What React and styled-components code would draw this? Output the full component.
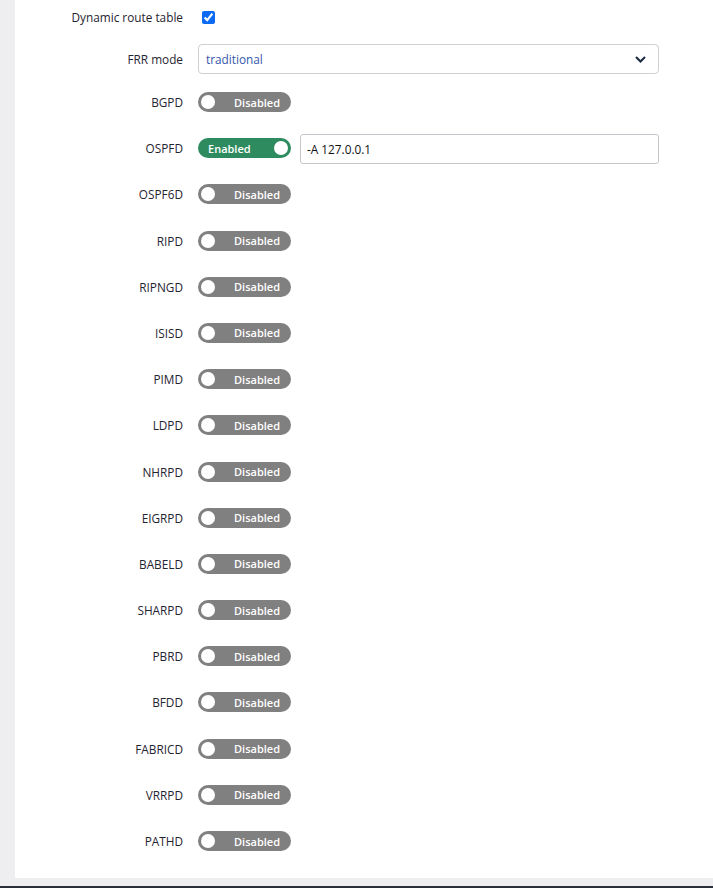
import React from "react";
import styled, { createGlobalStyle } from "styled-components";

const Global = createGlobalStyle`
  html, body { margin: 0; padding: 0; }
  body {
    background: #eeeef1;
    font-family: "Open Sans", "Liberation Sans", sans-serif;
    color: #1f2430;
  }
  * { box-sizing: border-box; }
`;

const Page = styled.div`
  display: flex;
  flex-direction: column;
  min-height: 888px;
`;

const Main = styled.div`
  padding: 0 0 8px 15px;
`;

const Card = styled.div`
  background: #fff;
  padding: 7px 54px 26px 0;
  display: flex;
  flex-direction: column;
  height: 878px;
`;

const Footer = styled.div`
  height: 2px;
  background: #2b2f3a;
`;

const Row = styled.div`
  display: grid;
  grid-template-columns: 168px 1fr;
  column-gap: 15px;
  align-items: center;
  height: 20px;
  margin-top: ${(p) => (p.$first ? 0 : p.$gap ?? 26.2)}px;
`;

const Label = styled.label`
  text-align: right;
  font-size: 11.8px;
  color: #1f2430;
  white-space: nowrap;
`;

const Control = styled.div`
  display: flex;
  align-items: center;
  gap: 9px;
  min-width: 0;
`;

const Check = styled.input`
  margin: 0 0 0 4px;
  width: 13px;
  height: 13px;
  accent-color: #0b6bf5;
`;

const SelectBox = styled.div`
  flex: 1;
  height: 30px;
  margin: -5px 0;
  border: 1px solid #cfcfd4;
  border-radius: 4px;
  display: flex;
  align-items: center;
  justify-content: space-between;
  padding: 0 12px 0 7px;
  font-size: 11.8px;
  color: #3557ad;
  background: #fff;
`;

const TextInput = styled.div`
  flex: 1;
  height: 30px;
  margin: -4px 0 -6px;
  border: 1px solid #c6c6cc;
  border-radius: 3px;
  display: flex;
  align-items: center;
  padding: 0 6px;
  font-size: 11.8px;
  color: #111;
`;

const Toggle = styled.div`
  width: 93px;
  height: 20px;
  border-radius: 10px;
  background: ${(p) => (p.$on ? "#2e8b5f" : "#808080")};
  display: flex;
  align-items: center;
  flex-direction: ${(p) => (p.$on ? "row-reverse" : "row")};
  padding: 0 3px;
  flex-shrink: 0;
`;

const Knob = styled.span`
  width: 14px;
  height: 14px;
  border-radius: 50%;
  background: #fff;
  flex-shrink: 0;
`;

const ToggleText = styled.span`
  flex: 1;
  text-align: ${(p) => (p.$on ? "left" : "right")};
  padding: ${(p) => (p.$on ? "0 0 0 7px" : "0 8px 0 0")};
  color: #fff;
  font-size: 11px;
  font-weight: 600;
`;

const Switch = ({ on }) => (
  <Toggle $on={on}>
    <Knob />
    <ToggleText $on={on}>{on ? "Enabled" : "Disabled"}</ToggleText>
  </Toggle>
);

const Chevron = () => (
  <svg width="11" height="7" viewBox="0 0 11 7">
    <path d="M1 1l4.5 4.5L10 1" fill="none" stroke="#1b2a40" strokeWidth="2" />
  </svg>
);

const daemons = [
  "OSPF6D", "RIPD", "RIPNGD", "ISISD", "PIMD", "LDPD", "NHRPD", "EIGRPD",
  "BABELD", "SHARPD", "PBRD", "BFDD", "FABRICD", "VRRPD", "PATHD",
];

export default function App() {
  return (
    <Page>
      <Global />
      <Main>
        <Card>
          <Row $first>
            <Label>Dynamic route table</Label>
            <Control>
              <Check type="checkbox" defaultChecked />
            </Control>
          </Row>
          <Row $gap={22}>
            <Label>FRR mode</Label>
            <Control>
              <SelectBox>
                <span>traditional</span>
                <Chevron />
              </SelectBox>
            </Control>
          </Row>
          <Row $gap={23}>
            <Label>BGPD</Label>
            <Control>
              <Switch on={false} />
            </Control>
          </Row>
          <Row>
            <Label>OSPFD</Label>
            <Control>
              <Switch on />
              <TextInput>-A 127.0.0.1</TextInput>
            </Control>
          </Row>
          {daemons.map((d) => (
            <Row key={d}>
              <Label>{d}</Label>
              <Control>
                <Switch on={false} />
              </Control>
            </Row>
          ))}
        </Card>
      </Main>
      <Footer />
    </Page>
  );
}
